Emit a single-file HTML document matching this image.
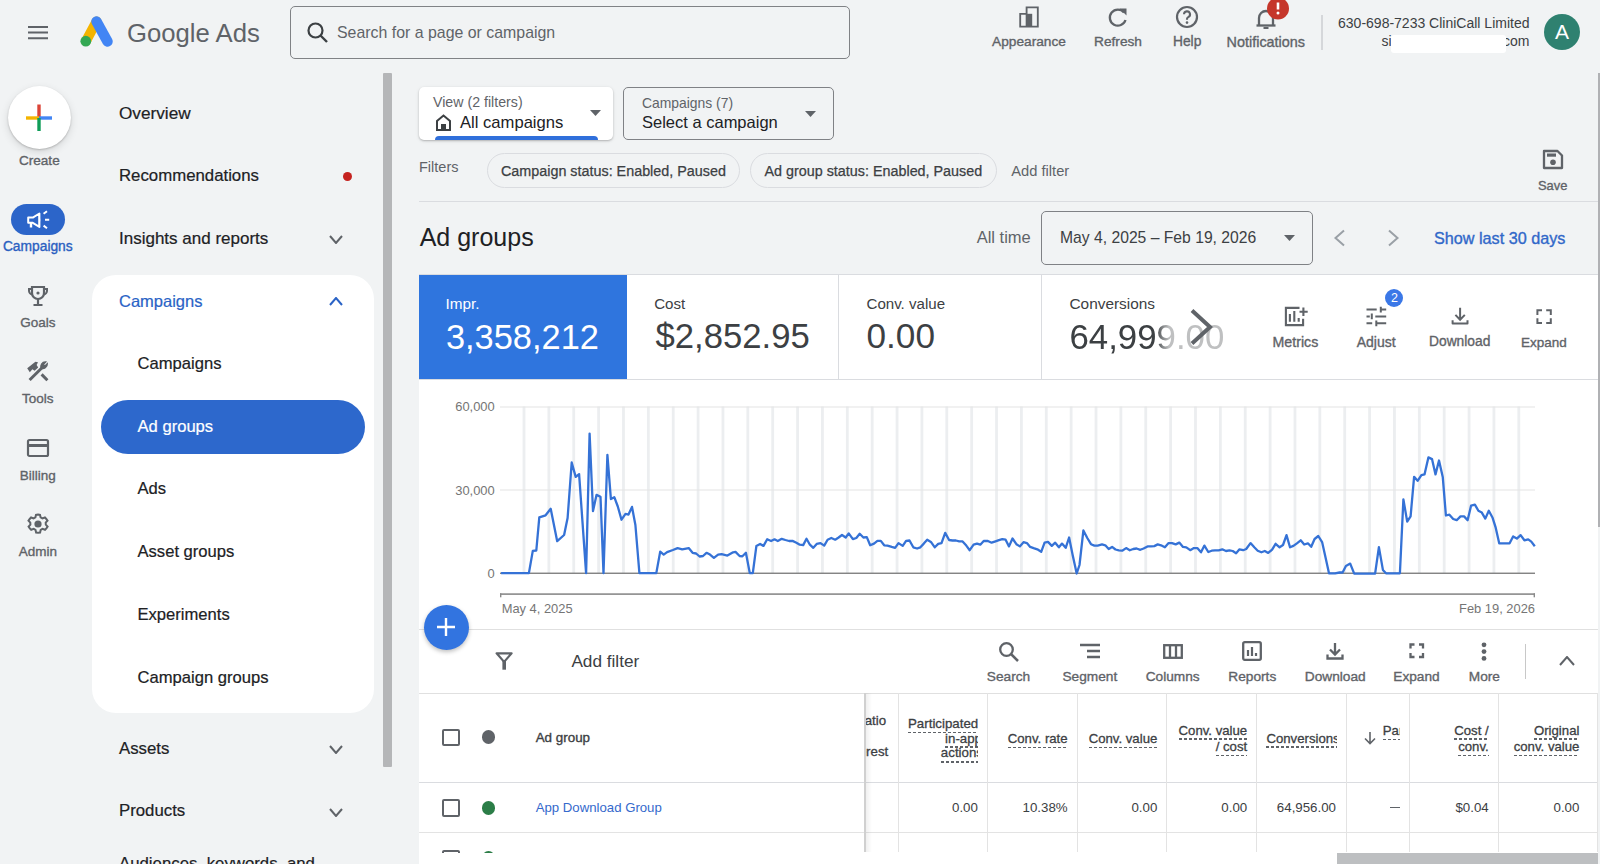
<!DOCTYPE html>
<html><head><meta charset="utf-8">
<style>
*{box-sizing:border-box;margin:0;padding:0}
html,body{width:1600px;height:864px;overflow:hidden;background:#f1f3f4;font-family:"Liberation Sans",sans-serif;color:#202124}
body{position:relative}
.t{position:absolute;white-space:nowrap;line-height:20px}
.b{position:absolute;display:block}
.du{padding-bottom:1.6px;background-image:linear-gradient(90deg,#5f6368 3px,transparent 3px);background-size:5px 1.6px;background-repeat:repeat-x;background-position:0 100%}
</style></head><body>
<svg class="b" style="left:26px;top:24px" width="24" height="18" viewBox="0 0 24 18"><path d="M2 3h20M2 8.6h20M2 14.2h20" stroke="#5f6368" stroke-width="2"/></svg>
<svg class="b" style="left:79px;top:14px" width="36" height="36" viewBox="0 0 36 36"><path d="M17.5 7.5 L7 27" stroke="#f4b400" stroke-width="10" stroke-linecap="round"/><path d="M17.5 7.5 L28.5 27.5" stroke="#4285f4" stroke-width="10.5" stroke-linecap="round"/><circle cx="6.8" cy="27.2" r="5.4" fill="#34a853"/></svg>
<div class="t" style="left:127.00px;top:22.59px;font-size:25.7px;color:#5f6368;">Google Ads</div>
<div class="b" style="left:290px;top:6px;width:560px;height:53px;border:1.5px solid #808285;border-radius:5px"></div>
<svg class="b" style="left:305px;top:20px" width="26" height="26" viewBox="0 0 26 26"><circle cx="10.5" cy="10.5" r="7" fill="none" stroke="#3c4043" stroke-width="2.2"/><path d="M15.5 15.5l6.5 6.5" stroke="#3c4043" stroke-width="2.4"/></svg>
<div class="t" style="left:337.00px;top:22.99px;font-size:15.9px;color:#5f6368;">Search for a page or campaign</div>
<svg class="b" style="left:1016px;top:5px" width="26" height="24" viewBox="0 0 28 30"><path d="M3 11h8v16H3z M11 3h14v24H11z" fill="none" stroke="#5f6368" stroke-width="2.3"/><path d="M11 11h7v16h-7z" fill="#5f6368"/></svg>
<div class="t" style="left:729.00px;width:600px;text-align:center;top:31.95px;font-size:13.7px;color:#5f6368;-webkit-text-stroke:0.35px #5f6368;">Appearance</div>
<svg class="b" style="left:1107px;top:6px" width="22" height="22" viewBox="0 0 22 22"><path d="M17 6.5A8 8 0 1 0 18.5 14" fill="none" stroke="#5f6368" stroke-width="2.3"/><path d="M12.5 2.5h7v7z" fill="#5f6368"/></svg>
<div class="t" style="left:818.00px;width:600px;text-align:center;top:31.95px;font-size:13.7px;color:#5f6368;-webkit-text-stroke:0.35px #5f6368;">Refresh</div>
<svg class="b" style="left:1175px;top:5px" width="24" height="24" viewBox="0 0 24 24"><circle cx="12" cy="12" r="10" fill="none" stroke="#5f6368" stroke-width="2.2"/><path d="M9 9.3a3 3 0 1 1 4.2 2.8c-.9.4-1.2 1-1.2 2v.6" fill="none" stroke="#5f6368" stroke-width="2.1"/><circle cx="12" cy="17.6" r="1.3" fill="#5f6368"/></svg>
<div class="t" style="left:887.20px;width:600px;text-align:center;top:31.92px;font-size:13.8px;color:#5f6368;-webkit-text-stroke:0.35px #5f6368;">Help</div>
<svg class="b" style="left:1255px;top:6px" width="22" height="24" viewBox="0 0 22 24"><path d="M4 19V12a7 7 0 0 1 14 0v7" fill="none" stroke="#5f6368" stroke-width="2.3"/><path d="M1.5 19.5h19" stroke="#5f6368" stroke-width="2.3"/><path d="M8.5 22h5" stroke="#5f6368" stroke-width="2"/></svg>
<svg class="b" style="left:1266px;top:-3px" width="24" height="24" viewBox="0 0 24 24"><circle cx="12" cy="11.5" r="11" fill="#c5362b"/><path d="M12 5.5v7" stroke="#fff" stroke-width="2.6"/><circle cx="12" cy="16" r="1.5" fill="#fff"/></svg>
<div class="t" style="left:965.80px;width:600px;text-align:center;top:31.71px;font-size:14.4px;color:#5f6368;-webkit-text-stroke:0.35px #5f6368;">Notifications</div>
<div class="b" style="left:1321px;top:15px;width:2px;height:35px;background:#d5d7da"></div>
<div class="t" style="right:70.50px;top:13.15px;font-size:14px;color:#3c4043;">630-698-7233 CliniCall Limited</div>
<div class="t" style="left:1381.60px;top:31.05px;font-size:14px;color:#3c4043;">si</div>
<div class="t" style="right:70.50px;top:31.05px;font-size:14px;color:#3c4043;">x.com</div>
<div class="b" style="left:1391px;top:35px;width:115px;height:18px;background:#fff;border-radius:3px"></div>
<div class="b" style="left:1544px;top:14px;width:36px;height:36px;border-radius:50%;background:#2f8170;color:#fff;font-size:21px;line-height:36px;text-align:center">A</div>
<div class="b" style="left:7.5px;top:86px;width:63px;height:63px;border-radius:50%;background:#fff;box-shadow:0 1px 2px rgba(0,0,0,.2),0 3px 8px rgba(0,0,0,.12)"></div>
<svg class="b" style="left:25px;top:104px" width="28" height="28" viewBox="0 0 28 28"><path d="M14 0.5v13.5" stroke="#db4437" stroke-width="3.4"/><path d="M1 14h13" stroke="#f4b400" stroke-width="3.4"/><path d="M14 14h13" stroke="#4285f4" stroke-width="3.4"/><path d="M14 14v13" stroke="#0f9d58" stroke-width="3.4"/></svg>
<div class="t" style="left:-260.70px;width:600px;text-align:center;top:151.18px;font-size:13.6px;color:#5f6368;-webkit-text-stroke:0.35px #5f6368;">Create</div>
<div class="b" style="left:11px;top:204px;width:54px;height:31px;background:#2c65c9;border-radius:16px"></div>
<svg class="b" style="left:20px;top:200px" width="40" height="40" viewBox="20 200 40 40"><path d="M28.2 217.6h4.6l6.6-4.1v13.4l-6.6-4.1h-4.6z" fill="none" stroke="#fff" stroke-width="2" stroke-linejoin="round"/><path d="M38.5 213.5q3.5 6.5 0 13z" fill="#fff"/><path d="M31 222v5.5" stroke="#fff" stroke-width="2.4"/><path d="M43.6 213.8l3.4-2.6M45 219.7h4.2M43.6 225.6l3.4 2.6" stroke="#fff" stroke-width="2"/></svg>
<div class="t" style="left:-262.20px;width:600px;text-align:center;top:237.02px;font-size:13.8px;color:#2a5fc1;-webkit-text-stroke:0.35px #2a5fc1;">Campaigns</div>
<svg class="b" style="left:27px;top:285px" width="22" height="22" viewBox="0 0 22 22"><path d="M5 2h12v6a6 6 0 0 1-12 0z" fill="none" stroke="#5f6368" stroke-width="2.2"/><path d="M5 4H2v2a4 4 0 0 0 3 3.5M17 4h3v2a4 4 0 0 1-3 3.5" fill="none" stroke="#5f6368" stroke-width="2"/><circle cx="11" cy="8" r="1.6" fill="#5f6368"/><path d="M11 14v5M6.5 20h9" stroke="#5f6368" stroke-width="2.2"/></svg>
<div class="t" style="left:-262.20px;width:600px;text-align:center;top:313.32px;font-size:13.5px;color:#5f6368;-webkit-text-stroke:0.35px #5f6368;">Goals</div>
<svg class="b" style="left:20px;top:355px" width="40" height="35" viewBox="20 355 40 35"><path d="M29.6 380L42.5 367.3" stroke="#5f6368" stroke-width="3"/><path d="M41.2 368.6a4.6 4.6 0 0 1 4.5-6.6l-2.3 2.4 1.5 1.5 2.4-2.3a4.6 4.6 0 0 1-6.6 4.5z" fill="#5f6368" stroke="#5f6368" stroke-width="1.3"/><path d="M41.6 374.4l5.8 5.8" stroke="#5f6368" stroke-width="3"/><path d="M27.2 368.3l8.2-6.6 2.6.6-1.4 2.6 1.6 2.6-3.6 3.3-2.2-1.6-2.6 3z" fill="#5f6368"/></svg>
<div class="t" style="left:-262.20px;width:600px;text-align:center;top:389.32px;font-size:13.5px;color:#5f6368;-webkit-text-stroke:0.35px #5f6368;">Tools</div>
<svg class="b" style="left:26px;top:437px" width="24" height="22" viewBox="0 0 24 22"><rect x="2" y="3" width="20" height="16" rx="1.5" fill="none" stroke="#5f6368" stroke-width="2.2"/><path d="M2 8.5h20" stroke="#5f6368" stroke-width="3"/></svg>
<div class="t" style="left:-262.20px;width:600px;text-align:center;top:465.82px;font-size:13.5px;color:#5f6368;-webkit-text-stroke:0.35px #5f6368;">Billing</div>
<svg class="b" style="left:26px;top:512px" width="24" height="24" viewBox="0 0 24 24"><path d="M12 2.5l2 .3.6 2.6 1.8 1 2.5-.9 1.4 1.5 1.2 1.7-1.8 2 .1 1.9 1.8 2-1.2 1.8-1.4 1.4-2.5-.9-1.8 1-.6 2.6-2 .3-2-.3-.6-2.6-1.8-1-2.5.9-1.4-1.4-1.2-1.8 1.8-2-.1-1.9-1.8-2 1.2-1.7 1.4-1.5 2.5.9 1.8-1 .6-2.6z" fill="none" stroke="#5f6368" stroke-width="2"/><circle cx="12" cy="12" r="3.6" fill="#5f6368"/></svg>
<div class="t" style="left:-262.20px;width:600px;text-align:center;top:541.82px;font-size:13.5px;color:#5f6368;-webkit-text-stroke:0.35px #5f6368;">Admin</div>
<div class="t" style="left:119.00px;top:102.64px;font-size:17.2px;color:#202124;-webkit-text-stroke:0.2px #202124;">Overview</div>
<div class="t" style="left:119.00px;top:165.58px;font-size:16.8px;color:#202124;-webkit-text-stroke:0.2px #202124;">Recommendations</div>
<div class="b" style="left:342.5px;top:171.5px;width:9px;height:9px;border-radius:50%;background:#c5221f"></div>
<div class="t" style="left:119.00px;top:229.11px;font-size:17px;color:#202124;-webkit-text-stroke:0.2px #202124;">Insights and reports</div>
<svg class="b" style="left:329.0px;top:235.0px" width="14" height="9" viewBox="0 0 14 9"><path d="M1 1L7.0 8L13 1" fill="none" stroke="#5f6368" stroke-width="2"/></svg>
<div class="b" style="left:92px;top:275px;width:282px;height:438px;background:#fff;border-radius:24px"></div>
<div class="t" style="left:119.00px;top:291.18px;font-size:16.5px;color:#2a63c6;-webkit-text-stroke:0.2px #2a63c6;">Campaigns</div>
<svg class="b" style="left:329.0px;top:297.0px" width="14" height="9" viewBox="0 0 14 9"><path d="M1 8L7.0 1L13 8" fill="none" stroke="#2a63c6" stroke-width="2"/></svg>
<div class="t" style="left:137.50px;top:353.84px;font-size:16.6px;color:#202124;-webkit-text-stroke:0.2px #202124;">Campaigns</div>
<div class="b" style="left:101px;top:400px;width:264px;height:54px;background:#2d68cc;border-radius:27px"></div>
<div class="t" style="left:137.50px;top:416.64px;font-size:16.6px;color:#fff;-webkit-text-stroke:0.2px #fff;">Ad groups</div>
<div class="t" style="left:137.50px;top:479.34px;font-size:16.6px;color:#202124;-webkit-text-stroke:0.2px #202124;">Ads</div>
<div class="t" style="left:137.50px;top:542.14px;font-size:16.6px;color:#202124;-webkit-text-stroke:0.2px #202124;">Asset groups</div>
<div class="t" style="left:137.50px;top:604.84px;font-size:16.6px;color:#202124;-webkit-text-stroke:0.2px #202124;">Experiments</div>
<div class="t" style="left:137.50px;top:667.64px;font-size:16.6px;color:#202124;-webkit-text-stroke:0.2px #202124;">Campaign groups</div>
<div class="t" style="left:119.00px;top:738.98px;font-size:16.8px;color:#202124;-webkit-text-stroke:0.2px #202124;">Assets</div>
<svg class="b" style="left:329.0px;top:745.0px" width="14" height="9" viewBox="0 0 14 9"><path d="M1 1L7.0 8L13 1" fill="none" stroke="#5f6368" stroke-width="2"/></svg>
<div class="t" style="left:119.00px;top:801.48px;font-size:16.8px;color:#202124;-webkit-text-stroke:0.2px #202124;">Products</div>
<svg class="b" style="left:329.0px;top:807.5px" width="14" height="9" viewBox="0 0 14 9"><path d="M1 1L7.0 8L13 1" fill="none" stroke="#5f6368" stroke-width="2"/></svg>
<div class="t" style="left:119.00px;top:853.68px;font-size:16.8px;color:#202124;-webkit-text-stroke:0.2px #202124;">Audiences, keywords, and</div>
<div class="b" style="left:383px;top:73px;width:9px;height:694px;background:#b5b6b8;border-radius:1px"></div>
<div class="b" style="left:419px;top:86.5px;width:194px;height:53.5px;background:#fff;border-radius:5px;box-shadow:0 1px 2px rgba(0,0,0,.22),0 1px 4px rgba(0,0,0,.08)"></div>
<div class="t" style="left:433.00px;top:91.68px;font-size:14.2px;color:#5f6368;">View (2 filters)</div>
<svg class="b" style="left:435px;top:114px" width="17" height="17" viewBox="0 0 17 17"><path d="M2 16V7L8.5 1.5 15 7v9z" fill="none" stroke="#3c4043" stroke-width="2"/><rect x="6" y="10" width="5" height="6" fill="#3c4043"/></svg>
<div class="t" style="left:460.00px;top:112.64px;font-size:16.6px;color:#202124;">All campaigns</div>
<svg class="b" style="left:590px;top:110px" width="11" height="7" viewBox="0 0 11 7"><path d="M0 0h11L5.5 6z" fill="#5f6368"/></svg>
<div class="b" style="left:435px;top:135.5px;width:163px;height:4.5px;background:#2f6fdb;border-radius:4px 4px 0 0"></div>
<div class="b" style="left:623px;top:87px;width:211px;height:53px;border:1.5px solid #7f8185;border-radius:5px"></div>
<div class="t" style="left:642.00px;top:92.98px;font-size:13.9px;color:#5f6368;">Campaigns (7)</div>
<div class="t" style="left:642.00px;top:112.28px;font-size:16.5px;color:#202124;">Select a campaign</div>
<svg class="b" style="left:805px;top:110.5px" width="11" height="7" viewBox="0 0 11 7"><path d="M0 0h11L5.5 6z" fill="#5f6368"/></svg>
<div class="t" style="left:419.00px;top:156.67px;font-size:14.5px;color:#5f6368;">Filters</div>
<div class="b" style="left:487px;top:153px;width:253px;height:35px;border:1px solid #dadce0;border-radius:18px"></div>
<div class="t" style="left:501.00px;top:160.62px;font-size:14.35px;color:#3c4043;-webkit-text-stroke:0.25px #3c4043">Campaign status: Enabled, Paused</div>
<div class="b" style="left:750px;top:153px;width:247px;height:35px;border:1px solid #dadce0;border-radius:18px"></div>
<div class="t" style="left:764.50px;top:160.62px;font-size:14.35px;color:#3c4043;-webkit-text-stroke:0.25px #3c4043">Ad group status: Enabled, Paused</div>
<div class="t" style="left:1011.30px;top:160.50px;font-size:14.7px;color:#5f6368;">Add filter</div>
<svg class="b" style="left:1542px;top:149px" width="22" height="21" viewBox="0 0 22 21"><path d="M2 2h13.5l4.5 4.5V19H2z" fill="none" stroke="#5f6368" stroke-width="2.3" stroke-linejoin="round"/><rect x="5" y="4.5" width="9" height="3.2" fill="#5f6368"/><circle cx="11" cy="13.2" r="2.8" fill="#5f6368"/></svg>
<div class="t" style="left:1252.70px;width:600px;text-align:center;top:176.13px;font-size:12.9px;color:#5f6368;-webkit-text-stroke:0.35px #5f6368;">Save</div>
<div class="b" style="left:419px;top:201px;width:1179px;height:1px;background:#dadce0"></div>
<div class="t" style="left:419.70px;top:227.33px;font-size:25px;color:#202124;">Ad groups</div>
<div class="t" style="left:976.70px;top:226.98px;font-size:16.5px;color:#5f6368;">All time</div>
<div class="b" style="left:1041px;top:211px;width:271.5px;height:53.5px;border:1.5px solid #7f8185;border-radius:5px"></div>
<div class="t" style="left:1060.00px;top:228.26px;font-size:15.7px;color:#3c4043;">May 4, 2025 – Feb 19, 2026</div>
<svg class="b" style="left:1283.5px;top:234.5px" width="11" height="7" viewBox="0 0 11 7"><path d="M0 0h11L5.5 6z" fill="#5f6368"/></svg>
<svg class="b" style="left:1333px;top:229px" width="13" height="18" viewBox="0 0 13 18"><path d="M11 1.5L2.5 9 11 16.5" fill="none" stroke="#9aa0a6" stroke-width="2"/></svg>
<svg class="b" style="left:1387px;top:229px" width="13" height="18" viewBox="0 0 13 18"><path d="M2 1.5L10.5 9 2 16.5" fill="none" stroke="#9aa0a6" stroke-width="2"/></svg>
<div class="t" style="left:1434.00px;top:227.58px;font-size:16.2px;color:#3168c9;-webkit-text-stroke:0.35px #3168c9;">Show last 30 days</div>
<div class="b" style="left:419px;top:274px;width:1179px;height:590px;background:#fff"></div>
<div class="b" style="left:419px;top:273.5px;width:1179px;height:1.0px;background:#dadce0"></div>
<div class="b" style="left:419px;top:274.5px;width:207.79999999999995px;height:104.5px;background:#2f75de"></div>
<div class="b" style="left:838px;top:274.5px;width:1px;height:104.5px;background:#dadce0"></div>
<div class="b" style="left:1041px;top:274.5px;width:1px;height:104.5px;background:#dadce0"></div>
<div class="b" style="left:419px;top:378.5px;width:1179px;height:1.0px;background:#dadce0"></div>
<div class="t" style="left:445.40px;top:293.70px;font-size:15.3px;color:#fff;">Impr.</div>
<div class="t" style="left:445.90px;top:326.57px;font-size:34.4px;color:#fff;">3,358,212</div>
<div class="t" style="left:654.20px;top:293.76px;font-size:15.1px;color:#3c4043;">Cost</div>
<div class="t" style="left:655.50px;top:326.47px;font-size:34.7px;color:#3c4043;">$2,852.95</div>
<div class="t" style="left:866.50px;top:293.76px;font-size:15.1px;color:#3c4043;">Conv. value</div>
<div class="t" style="left:866.50px;top:326.30px;font-size:35.2px;color:#3c4043;">0.00</div>
<div class="t" style="left:1069.50px;top:293.66px;font-size:15.4px;color:#3c4043;">Conversions</div>
<div class="t" style="left:1069.5px;top:316.6px;height:50px;line-height:40px;padding-right:4px;font-size:34.8px;color:#3c4043;-webkit-mask-image:linear-gradient(90deg,#000 0,#000 85px,rgba(0,0,0,.33) 99px,rgba(0,0,0,.33) 200px)">64,999.00</div>
<svg class="b" style="left:1189px;top:308px" width="25" height="38" viewBox="0 0 25 38"><path d="M3 2.5L21 19 3 35.5" fill="none" stroke="#5f6368" stroke-width="4"/></svg>
<svg class="b" style="left:1278px;top:300px" width="34" height="32" viewBox="1278 300 34 32"><path d="M1299.5 307.9H1285.9V325.1H1303.1V318.8" fill="none" stroke="#5f6368" stroke-width="2.1"/><path d="M1289.9 314v7.7M1294.3 311.1v10.6M1298.7 318v3.7" stroke="#5f6368" stroke-width="2.1"/><path d="M1299.5 311.8h8.2M1303.4 307.6v8.4" stroke="#5f6368" stroke-width="2.1"/></svg>
<div class="t" style="left:995.40px;width:600px;text-align:center;top:332.28px;font-size:14.2px;color:#5f6368;-webkit-text-stroke:0.35px #5f6368;">Metrics</div>
<svg class="b" style="left:1360px;top:300px" width="32" height="32" viewBox="1360 300 32 32"><path d="M1366.5 309.5h10.2M1380.5 309.5h5.7M1380.8 306.8v5.6M1366.5 316.4h3.3M1375.3 316.4h10.9M1371.8 313.6v5.6M1366.5 323.3h5.7M1376.3 323.3h9.9M1376.3 320.4v5.8" stroke="#5f6368" stroke-width="2"/></svg>
<div class="b" style="left:1385.4px;top:288.5px;width:18px;height:18px;border-radius:50%;background:#3b78e7;color:#fff;font-size:12.5px;line-height:18px;text-align:center">2</div>
<div class="t" style="left:1076.20px;width:600px;text-align:center;top:332.35px;font-size:14px;color:#5f6368;-webkit-text-stroke:0.35px #5f6368;">Adjust</div>
<svg class="b" style="left:1445px;top:300px" width="30" height="32" viewBox="1445 300 30 32"><path d="M1460.1 307.7v12M1455.4 314.9l4.7 4.8 4.7-4.8" fill="none" stroke="#5f6368" stroke-width="2"/><path d="M1452.6 320.3v3.3h14.9v-3.3" fill="none" stroke="#5f6368" stroke-width="2" stroke-linejoin="round"/></svg>
<div class="t" style="left:1159.70px;width:600px;text-align:center;top:332.42px;font-size:13.8px;color:#5f6368;-webkit-text-stroke:0.35px #5f6368;">Download</div>
<svg class="b" style="left:1530px;top:302px" width="30" height="28" viewBox="1530 302 30 28"><path d="M1537.4 315V310.3H1542M1546.2 310.3h4.6V315M1550.8 318.2v4.7h-4.6M1542 322.9h-4.6v-4.7" fill="none" stroke="#5f6368" stroke-width="2"/></svg>
<div class="t" style="left:1243.80px;width:600px;text-align:center;top:332.52px;font-size:13.5px;color:#5f6368;-webkit-text-stroke:0.35px #5f6368;">Expand</div>
<svg class="b" style="left:0;top:0" width="1600" height="864" viewBox="0 0 1600 864"><rect x="522.60" y="406.5" width="2.8" height="166.6" fill="#eceef0"/><rect x="547.47" y="406.5" width="2.8" height="166.6" fill="#eceef0"/><rect x="572.34" y="406.5" width="2.8" height="166.6" fill="#eceef0"/><rect x="597.21" y="406.5" width="2.8" height="166.6" fill="#eceef0"/><rect x="622.08" y="406.5" width="2.8" height="166.6" fill="#eceef0"/><rect x="646.95" y="406.5" width="2.8" height="166.6" fill="#eceef0"/><rect x="671.82" y="406.5" width="2.8" height="166.6" fill="#eceef0"/><rect x="696.69" y="406.5" width="2.8" height="166.6" fill="#eceef0"/><rect x="721.56" y="406.5" width="2.8" height="166.6" fill="#eceef0"/><rect x="746.43" y="406.5" width="2.8" height="166.6" fill="#eceef0"/><rect x="771.30" y="406.5" width="2.8" height="166.6" fill="#eceef0"/><rect x="796.17" y="406.5" width="2.8" height="166.6" fill="#eceef0"/><rect x="821.04" y="406.5" width="2.8" height="166.6" fill="#eceef0"/><rect x="845.91" y="406.5" width="2.8" height="166.6" fill="#eceef0"/><rect x="870.78" y="406.5" width="2.8" height="166.6" fill="#eceef0"/><rect x="895.65" y="406.5" width="2.8" height="166.6" fill="#eceef0"/><rect x="920.52" y="406.5" width="2.8" height="166.6" fill="#eceef0"/><rect x="945.39" y="406.5" width="2.8" height="166.6" fill="#eceef0"/><rect x="970.26" y="406.5" width="2.8" height="166.6" fill="#eceef0"/><rect x="995.13" y="406.5" width="2.8" height="166.6" fill="#eceef0"/><rect x="1020.00" y="406.5" width="2.8" height="166.6" fill="#eceef0"/><rect x="1044.87" y="406.5" width="2.8" height="166.6" fill="#eceef0"/><rect x="1069.74" y="406.5" width="2.8" height="166.6" fill="#eceef0"/><rect x="1094.61" y="406.5" width="2.8" height="166.6" fill="#eceef0"/><rect x="1119.48" y="406.5" width="2.8" height="166.6" fill="#eceef0"/><rect x="1144.35" y="406.5" width="2.8" height="166.6" fill="#eceef0"/><rect x="1169.22" y="406.5" width="2.8" height="166.6" fill="#eceef0"/><rect x="1194.09" y="406.5" width="2.8" height="166.6" fill="#eceef0"/><rect x="1218.96" y="406.5" width="2.8" height="166.6" fill="#eceef0"/><rect x="1243.83" y="406.5" width="2.8" height="166.6" fill="#eceef0"/><rect x="1268.70" y="406.5" width="2.8" height="166.6" fill="#eceef0"/><rect x="1293.57" y="406.5" width="2.8" height="166.6" fill="#eceef0"/><rect x="1318.44" y="406.5" width="2.8" height="166.6" fill="#eceef0"/><rect x="1343.31" y="406.5" width="2.8" height="166.6" fill="#eceef0"/><rect x="1368.18" y="406.5" width="2.8" height="166.6" fill="#eceef0"/><rect x="1393.05" y="406.5" width="2.8" height="166.6" fill="#eceef0"/><rect x="1417.92" y="406.5" width="2.8" height="166.6" fill="#eceef0"/><rect x="1442.79" y="406.5" width="2.8" height="166.6" fill="#eceef0"/><rect x="1467.66" y="406.5" width="2.8" height="166.6" fill="#eceef0"/><rect x="1492.53" y="406.5" width="2.8" height="166.6" fill="#eceef0"/><rect x="1517.40" y="406.5" width="2.8" height="166.6" fill="#eceef0"/><rect x="500" y="406.5" width="1035" height="1" fill="#e3e3e3"/><rect x="500" y="489.5" width="1035" height="1" fill="#e3e3e3"/><rect x="500" y="572.6" width="1035" height="1.3" fill="#777"/><rect x="500" y="593.3" width="1035" height="1.6" fill="#8a8a8a"/><rect x="500" y="593.3" width="1.4" height="4" fill="#8a8a8a"/><rect x="1533.6" y="593.3" width="1.4" height="4" fill="#8a8a8a"/><polyline points="501.1,573.1 528.9,573.1 532.8,550.9 536.3,550.5 539.3,517.4 545.6,515.3 550.7,508.8 557.2,541.2 564.1,535.0 567.6,518.0 571.7,462.5 575.7,476.9 579.1,474.1 586.1,573.1 589.6,433.6 593.0,511.1 596.5,494.9 600.5,496.8 603.5,573.1 607.4,454.9 610.9,499.1 614.3,497.2 617.8,506.5 621.5,519.7 625.5,513.9 628.5,514.6 632.0,506.9 635.4,525.0 639.4,573.1 656.3,573.1 660.2,551.6 663.7,554.6 667.1,552.1 672.9,550.0 677.6,548.1 682.2,549.3 688.7,548.1 692.6,552.8 696.1,553.5 699.6,556.5 703.0,556.0 706.5,552.8 710.0,554.6 713.9,557.9 718.1,554.6 721.6,554.2 727.4,555.6 733.1,552.3 735.5,551.9 739.6,556.0 742.4,556.3 745.9,552.8 749.8,573.1 752.8,573.1 756.4,545.9 760.1,543.9 763.5,545.9 767.2,539.3 771.1,541.0 774.5,539.3 777.8,541.0 781.7,538.8 785.4,540.0 789.1,541.0 792.5,540.9 796.4,542.7 799.8,544.7 803.2,545.1 806.5,538.8 809.9,544.7 813.3,547.8 816.7,543.9 820.5,543.1 824.2,545.6 827.6,539.7 831.3,538.0 835.2,539.7 838.6,537.5 842.0,535.0 845.7,537.5 848.7,533.4 852.9,539.2 856.3,538.0 859.7,533.8 863.4,537.5 866.8,537.1 870.2,545.3 874.0,543.6 877.4,540.9 880.8,540.9 884.2,545.3 887.5,545.6 891.7,546.9 895.1,547.8 898.5,543.1 902.7,545.9 906.1,540.9 909.5,540.5 913.3,547.3 917.1,548.5 920.4,547.3 923.8,543.6 927.2,539.7 930.9,541.9 934.8,547.3 938.2,543.9 941.5,543.1 945.2,532.9 949.1,540.0 952.5,540.5 955.9,540.5 959.2,541.4 962.6,541.4 966.3,545.6 969.7,550.2 973.6,544.7 977.0,543.6 980.3,544.7 983.7,541.0 987.9,541.0 991.6,542.7 995.5,541.4 998.9,540.2 1002.3,539.2 1005.6,539.7 1009.0,546.4 1012.5,538.5 1016.4,544.2 1019.8,546.4 1023.5,542.2 1026.9,543.1 1030.2,546.9 1033.6,548.1 1037.3,549.3 1041.2,551.8 1044.6,542.6 1048.0,541.9 1051.8,545.9 1055.2,542.7 1058.9,547.3 1062.0,543.6 1065.7,547.8 1069.1,537.5 1072.8,555.7 1076.7,573.5 1079.5,565.0 1083.4,530.4 1087.3,538.0 1091.0,544.2 1094.4,545.6 1097.7,545.6 1102.0,544.4 1105.3,545.3 1108.7,549.0 1112.1,546.9 1115.5,549.5 1118.8,550.3 1122.2,550.7 1126.1,548.1 1129.8,550.3 1133.2,549.0 1136.6,548.5 1140.3,549.8 1143.6,548.5 1147.5,546.4 1150.9,546.4 1154.3,546.1 1157.7,544.4 1161.0,545.3 1164.9,547.3 1168.6,543.1 1172.0,543.1 1175.7,544.4 1179.3,542.6 1183.0,546.9 1186.3,547.3 1190.2,550.2 1193.9,548.1 1197.3,548.1 1201.0,552.3 1204.4,545.6 1208.3,552.0 1211.7,550.7 1215.0,550.3 1218.7,550.3 1222.3,549.3 1226.0,551.0 1229.4,550.3 1232.7,551.0 1236.1,553.2 1239.5,549.3 1243.2,550.2 1246.2,549.0 1250.5,543.1 1254.3,547.3 1257.7,550.7 1261.4,552.3 1264.8,551.0 1268.2,552.9 1272.1,549.7 1275.6,543.8 1279.6,547.3 1283.0,545.0 1286.5,535.1 1290.0,547.3 1293.4,545.9 1296.9,543.3 1300.7,540.3 1304.2,544.5 1307.9,543.3 1311.2,546.8 1314.6,539.0 1318.3,536.0 1322.1,542.1 1325.6,557.7 1329.0,573.3 1335.1,573.3 1339.5,572.5 1342.6,572.5 1345.9,565.9 1350.2,563.6 1354.2,573.7 1375.1,573.7 1378.9,547.1 1382.9,569.9 1386.0,573.3 1399.9,573.3 1403.4,499.4 1407.2,521.6 1410.6,516.4 1414.1,476.8 1417.6,480.8 1421.4,475.2 1424.5,474.4 1428.4,457.4 1432.0,459.1 1435.5,474.4 1439.0,460.5 1442.8,477.3 1445.9,515.5 1449.4,514.7 1453.2,519.0 1456.7,520.2 1460.5,516.4 1464.1,516.4 1467.6,520.2 1471.1,505.6 1474.9,504.6 1478.4,510.8 1481.8,512.6 1485.3,518.6 1488.8,510.8 1492.6,517.8 1495.7,527.7 1499.2,543.3 1509.6,543.3 1513.1,536.4 1516.9,538.6 1520.6,535.1 1524.4,540.3 1528.2,539.3 1531.3,541.6 1534.8,546.3" fill="none" stroke="#3572d6" stroke-width="2.3" stroke-linejoin="round"/></svg>
<div class="t" style="right:1105.30px;top:397.23px;font-size:12.9px;color:#757575;">60,000</div>
<div class="t" style="right:1105.30px;top:480.53px;font-size:12.9px;color:#757575;">30,000</div>
<div class="t" style="right:1105.30px;top:563.83px;font-size:12.9px;color:#757575;">0</div>
<div class="t" style="left:501.70px;top:598.53px;font-size:12.9px;color:#757575;">May 4, 2025</div>
<div class="t" style="right:65.00px;top:598.53px;font-size:12.9px;color:#757575;">Feb 19, 2026</div>
<div class="b" style="left:419px;top:628.5px;width:1179px;height:1.0px;background:#e0e0e0"></div>
<div class="b" style="left:423.5px;top:605px;width:45px;height:45px;border-radius:50%;background:#3274e0;box-shadow:0 2px 4px rgba(0,0,0,.25)"></div>
<svg class="b" style="left:435px;top:616px" width="22" height="22" viewBox="0 0 22 22"><path d="M11 2v18M2 11h18" stroke="#fff" stroke-width="2.4"/></svg>
<svg class="b" style="left:490px;top:645px" width="30" height="30" viewBox="490 645 30 30"><path d="M496.6 653.3h15l-7.5 8.6z" fill="none" stroke="#5f6368" stroke-width="2.2" stroke-linejoin="round"/><path d="M502.4 660.5h3.6v9.2h-3.6z" fill="#5f6368"/></svg>
<div class="t" style="left:571.40px;top:650.74px;font-size:17.2px;color:#3c4043;">Add filter</div>
<svg class="b" style="left:997.5px;top:641px" width="22" height="22" viewBox="0 0 22 22"><circle cx="8.5" cy="8.5" r="6.3" fill="none" stroke="#5f6368" stroke-width="2.3"/><path d="M13 13l7 7" stroke="#5f6368" stroke-width="2.5"/></svg>
<div class="t" style="left:708.50px;width:600px;text-align:center;top:666.85px;font-size:13.7px;color:#5f6368;-webkit-text-stroke:0.35px #5f6368;">Search</div>
<svg class="b" style="left:1079.9px;top:643px" width="20" height="16" viewBox="0 0 20 16"><path d="M0 2h20M7 8h13M7 14h13" stroke="#5f6368" stroke-width="2.3"/></svg>
<div class="t" style="left:789.90px;width:600px;text-align:center;top:666.85px;font-size:13.7px;color:#5f6368;-webkit-text-stroke:0.35px #5f6368;">Segment</div>
<svg class="b" style="left:1162.7px;top:643.5px" width="20" height="15" viewBox="0 0 20 15"><rect x="1.2" y="1.2" width="17.6" height="12.6" fill="none" stroke="#5f6368" stroke-width="2.3"/><path d="M7 1v13M13 1v13" stroke="#5f6368" stroke-width="2.3"/></svg>
<div class="t" style="left:872.70px;width:600px;text-align:center;top:666.85px;font-size:13.7px;color:#5f6368;-webkit-text-stroke:0.35px #5f6368;">Columns</div>
<svg class="b" style="left:1242.3px;top:641px" width="20" height="20" viewBox="0 0 20 20"><rect x="1.2" y="1.2" width="17.6" height="17.6" rx="1.5" fill="none" stroke="#5f6368" stroke-width="2.3"/><path d="M6 9v6M10 6v9M14 12v3" stroke="#5f6368" stroke-width="2.2"/></svg>
<div class="t" style="left:952.30px;width:600px;text-align:center;top:666.85px;font-size:13.7px;color:#5f6368;-webkit-text-stroke:0.35px #5f6368;">Reports</div>
<svg class="b" style="left:1326.2px;top:642px" width="18" height="18" viewBox="0 0 18 18"><path d="M9 1v11M4 7.5l5 5 5-5" fill="none" stroke="#5f6368" stroke-width="2.3"/><path d="M1.5 12.5v4h15v-4" fill="none" stroke="#5f6368" stroke-width="2.3"/></svg>
<div class="t" style="left:1035.20px;width:600px;text-align:center;top:666.85px;font-size:13.7px;color:#5f6368;-webkit-text-stroke:0.35px #5f6368;">Download</div>
<svg class="b" style="left:1408.5px;top:643px" width="16" height="16" viewBox="0 0 16 16"><path d="M1.5 5.5V1.5H5.5M10 1.5h4v4M14 10v4h-4M5.5 14H1.5v-4" fill="none" stroke="#5f6368" stroke-width="2.3"/></svg>
<div class="t" style="left:1116.50px;width:600px;text-align:center;top:666.85px;font-size:13.7px;color:#5f6368;-webkit-text-stroke:0.35px #5f6368;">Expand</div>
<svg class="b" style="left:1481.4px;top:641.5px" width="6" height="19" viewBox="0 0 6 19"><circle cx="3" cy="2.8" r="2.4" fill="#5f6368"/><circle cx="3" cy="9.6" r="2.4" fill="#5f6368"/><circle cx="3" cy="16.4" r="2.4" fill="#5f6368"/></svg>
<div class="t" style="left:1184.40px;width:600px;text-align:center;top:666.85px;font-size:13.7px;color:#5f6368;-webkit-text-stroke:0.35px #5f6368;">More</div>
<div class="b" style="left:1524.5px;top:643.5px;width:1.5px;height:35.0px;background:#c8c8c8"></div>
<svg class="b" style="left:1558.6px;top:655.8px" width="16" height="10" viewBox="0 0 16 10"><path d="M1 9L8.0 1L15 9" fill="none" stroke="#5f6368" stroke-width="2"/></svg>
<div class="b" style="left:419px;top:692.5px;width:1179px;height:1.0px;background:#e0e0e0"></div>
<div class="b" style="left:419px;top:781.5px;width:1179px;height:1.2999999999999545px;background:#dadce0"></div>
<div class="b" style="left:419px;top:832px;width:1179px;height:1px;background:#e3e3e3"></div>
<div class="b" style="left:863.5px;top:693px;width:2.5px;height:159px;background:#d0d0d0"></div>
<div class="b" style="left:866px;top:693px;width:6px;height:159px;background:linear-gradient(90deg,rgba(0,0,0,.06),rgba(0,0,0,0))"></div>
<div class="b" style="left:897.5px;top:693px;width:1.0px;height:159px;background:#e3e3e3"></div>
<div class="b" style="left:987.1px;top:693px;width:1.0px;height:159px;background:#e3e3e3"></div>
<div class="b" style="left:1077.0px;top:693px;width:1.0px;height:159px;background:#e3e3e3"></div>
<div class="b" style="left:1166.3px;top:693px;width:1.0px;height:159px;background:#e3e3e3"></div>
<div class="b" style="left:1256.3px;top:693px;width:1.0px;height:159px;background:#e3e3e3"></div>
<div class="b" style="left:1346.1px;top:693px;width:1.0px;height:159px;background:#e3e3e3"></div>
<div class="b" style="left:1408.5px;top:693px;width:1.0px;height:159px;background:#e3e3e3"></div>
<div class="b" style="left:1498.3px;top:693px;width:1.0px;height:159px;background:#e3e3e3"></div>
<div class="b" style="left:1597px;top:693px;width:1px;height:159px;background:#e3e3e3"></div>
<div class="b" style="left:441.5px;top:728.5px;width:18.0px;height:17.5px;border:2px solid #5f6368;border-radius:2px"></div>
<div class="b" style="left:481.7px;top:730.4px;width:13.5px;height:13.5px;border-radius:50%;background:#5f6368"></div>
<div class="t" style="left:535.70px;top:727.85px;font-size:13.4px;color:#3c4043;-webkit-text-stroke:0.35px #3c4043;">Ad group</div>
<div class="b" style="left:441.5px;top:799px;width:18.0px;height:17.5px;border:2px solid #5f6368;border-radius:2px"></div>
<div class="b" style="left:481.7px;top:801px;width:13.5px;height:13.5px;border-radius:50%;background:#2b7d47"></div>
<div class="t" style="left:535.70px;top:798.02px;font-size:13.2px;color:#3469cc;">App Download Group</div>
<div class="b" style="left:419px;top:833px;width:1179px;height:19.5px;overflow:hidden"><div class="b" style="left:22.5px;top:16.5px;width:18px;height:17.5px;border:2px solid #5f6368;border-radius:2px"></div><div class="b" style="left:62.7px;top:18px;width:13.5px;height:13.5px;border-radius:50%;background:#2b7d47"></div></div>
<div class="b" style="left:1337px;top:853px;width:261px;height:11px;background:#bdbfc1"></div>
<div class="b" style="left:866px;top:693px;width:32px;height:89px;overflow:hidden"><div class="t" style="left:-8px;top:18.39px;font-size:13.3px;color:#3c4043;-webkit-text-stroke:0.3px #3c4043">catio</div><div class="t" style="left:-11px;top:49.39px;font-size:13.3px;color:#3c4043;-webkit-text-stroke:0.3px #3c4043">terest</div></div>
<div class="b" style="left:899px;top:693px;width:79px;height:89px;overflow:hidden"><div class="t du" style="left:9px;top:24.24px;line-height:14.5px;font-size:13.3px;color:#3c4043;-webkit-text-stroke:0.3px #3c4043">Participated</div><div class="t du" style="right:-4px;top:38.84px;line-height:14.5px;font-size:13.3px;color:#3c4043;-webkit-text-stroke:0.3px #3c4043">in-app</div><div class="t du" style="right:-5px;top:53.44px;line-height:14.5px;font-size:13.3px;color:#3c4043;-webkit-text-stroke:0.3px #3c4043">actions</div></div>
<div class="t du" style="right:532.4px;top:732.17px;line-height:14.5px;font-size:13.2px;color:#3c4043;-webkit-text-stroke:0.3px #3c4043">Conv. rate</div>
<div class="t du" style="right:442.7px;top:732.17px;line-height:14.5px;font-size:13.2px;color:#3c4043;-webkit-text-stroke:0.3px #3c4043">Conv. value</div>
<div class="t du" style="right:352.8px;top:723.67px;line-height:14.5px;font-size:13.2px;color:#3c4043;-webkit-text-stroke:0.3px #3c4043">Conv. value</div>
<div class="t du" style="right:352.8px;top:740.17px;line-height:14.5px;font-size:13.2px;color:#3c4043;-webkit-text-stroke:0.3px #3c4043">/ cost</div>
<div class="b" style="left:1258px;top:693px;width:78.5px;height:89px;overflow:hidden"><div class="t du" style="left:8.4px;top:38.87px;line-height:14.5px;font-size:13.2px;color:#3c4043;-webkit-text-stroke:0.3px #3c4043">Conversions</div></div>
<svg class="b" style="left:1363px;top:731px" width="14" height="14" viewBox="0 0 14 14"><path d="M7 1v11M2 7.5l5 5 5-5" fill="none" stroke="#5f6368" stroke-width="1.6"/></svg>
<div class="b" style="left:1382px;top:693px;width:17.5px;height:89px;overflow:hidden"><div class="t du" style="left:0.8px;top:31.17px;line-height:14.5px;font-size:13.2px;color:#3c4043;-webkit-text-stroke:0.3px #3c4043">Partial</div></div>
<div class="t du" style="right:111.3px;top:723.67px;line-height:14.5px;font-size:13.2px;color:#3c4043;-webkit-text-stroke:0.3px #3c4043">Cost /</div>
<div class="t du" style="right:111.3px;top:740.17px;line-height:14.5px;font-size:13.2px;color:#3c4043;-webkit-text-stroke:0.3px #3c4043">conv.</div>
<div class="t du" style="right:20.6px;top:723.67px;line-height:14.5px;font-size:13.2px;color:#3c4043;-webkit-text-stroke:0.3px #3c4043">Original</div>
<div class="t du" style="right:20.6px;top:740.17px;line-height:14.5px;font-size:13.2px;color:#3c4043;-webkit-text-stroke:0.3px #3c4043">conv. value</div>
<div class="t" style="right:622.10px;top:798.29px;font-size:13.3px;color:#3c4043;">0.00</div>
<div class="t" style="right:532.40px;top:798.29px;font-size:13.3px;color:#3c4043;">10.38%</div>
<div class="t" style="right:442.70px;top:798.29px;font-size:13.3px;color:#3c4043;">0.00</div>
<div class="t" style="right:352.80px;top:798.29px;font-size:13.3px;color:#3c4043;">0.00</div>
<div class="t" style="right:264.00px;top:798.29px;font-size:13.3px;color:#3c4043;">64,956.00</div>
<div class="t" style="right:111.30px;top:798.29px;font-size:13.3px;color:#3c4043;">$0.04</div>
<div class="t" style="right:20.60px;top:798.29px;font-size:13.3px;color:#3c4043;">0.00</div>
<div class="b" style="left:1389.5px;top:807.2px;width:10.0px;height:1.1999999999999318px;background:#5f6368"></div>
<div class="b" style="left:1598px;top:73px;width:2px;height:454px;background:#b0b1b4"></div>
</body></html>
